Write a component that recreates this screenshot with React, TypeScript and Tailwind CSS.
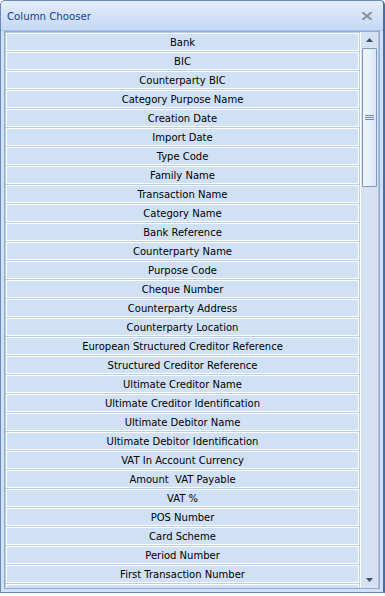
import React from "react";

const items = [
  "Bank",
  "BIC",
  "Counterparty BIC",
  "Category Purpose Name",
  "Creation Date",
  "Import Date",
  "Type Code",
  "Family Name",
  "Transaction Name",
  "Category Name",
  "Bank Reference",
  "Counterparty Name",
  "Purpose Code",
  "Cheque Number",
  "Counterparty Address",
  "Counterparty Location",
  "European Structured Creditor Reference",
  "Structured Creditor Reference",
  "Ultimate Creditor Name",
  "Ultimate Creditor Identification",
  "Ultimate Debitor Name",
  "Ultimate Debitor Identification",
  "VAT In Account Currency",
  "Amount  VAT Payable",
  "VAT %",
  "POS Number",
  "Card Scheme",
  "Period Number",
  "First Transaction Number",
  "",
];

export default function App() {
  return (
    <div className="w-[385px] h-[596px] bg-white">
      <div className="w-[385px] h-[593px] flex flex-col rounded-t-[5px] border border-[#6a8ab8] border-r-2 border-r-[#4e6f9e] bg-[#d3e1f4] overflow-hidden">
        {/* Title bar */}
        <div className="h-[30px] shrink-0 flex items-center justify-between pl-[6px] pr-[11px] pt-[3px] bg-gradient-to-b from-[#e6eefa] via-[#d3e2f7] to-[#c6d8f3] border-b border-[#a9c2e6]">
          <span className="text-[10.2px] text-[#15428b] leading-none font-['DejaVu_Sans']">Column Chooser</span>
          <svg width="10" height="8" viewBox="0 0 10 8" className="mb-[2px]">
            <path d="M1 0.8 L9 7.2 M9 0.8 L1 7.2" stroke="#8a909c" strokeWidth="2" strokeLinecap="square" />
          </svg>
        </div>
        {/* Body */}
        <div className="flex-1 min-h-0 flex px-[3px] pt-0 pb-[3px]">
          <div className="flex-1 flex border border-[#8eaad6] bg-white overflow-hidden">
            <div className="flex-1 flex flex-col gap-px p-px bg-[#b7cdec] overflow-hidden border-r border-white">
              {items.map((t, i) => (
                <div
                  key={i}
                  className="h-[18px] shrink-0 flex items-center justify-center pt-[2px] border border-white bg-[#d0e0f5] text-[10px] text-black whitespace-pre leading-none font-['DejaVu_Sans']"
                >
                  {t}
                </div>
              ))}
            </div>
            {/* Scrollbar */}
            <div className="w-[18px] shrink-0 flex flex-col bg-[#d5e2f4] border-r border-[#a9c3e8]">
              <div className="h-[16px] shrink-0 flex items-center justify-center">
                <svg width="7" height="4" viewBox="0 0 7 4">
                  <path d="M0 4 L3.5 0 L7 4 Z" fill="#3d4f6e" />
                </svg>
              </div>
              <div className="h-[139px] shrink-0 mx-px flex flex-col items-center justify-center border border-[#8298bd] rounded-[1px] bg-gradient-to-r from-[#eef4fc] via-[#e8f0fb] to-[#d7e4f6]">
                <div className="flex flex-col gap-px">
                  <div className="w-[9px] h-px bg-[#7189b3]" />
                  <div className="w-[9px] h-px bg-[#7189b3]" />
                  <div className="w-[9px] h-px bg-[#7189b3]" />
                </div>
              </div>
              <div className="flex-1" />
              <div className="h-[16px] shrink-0 flex items-center justify-center">
                <svg width="7" height="4" viewBox="0 0 7 4">
                  <path d="M0 0 L7 0 L3.5 4 Z" fill="#3d4f6e" />
                </svg>
              </div>
            </div>
          </div>
        </div>
      </div>
    </div>
  );
}
